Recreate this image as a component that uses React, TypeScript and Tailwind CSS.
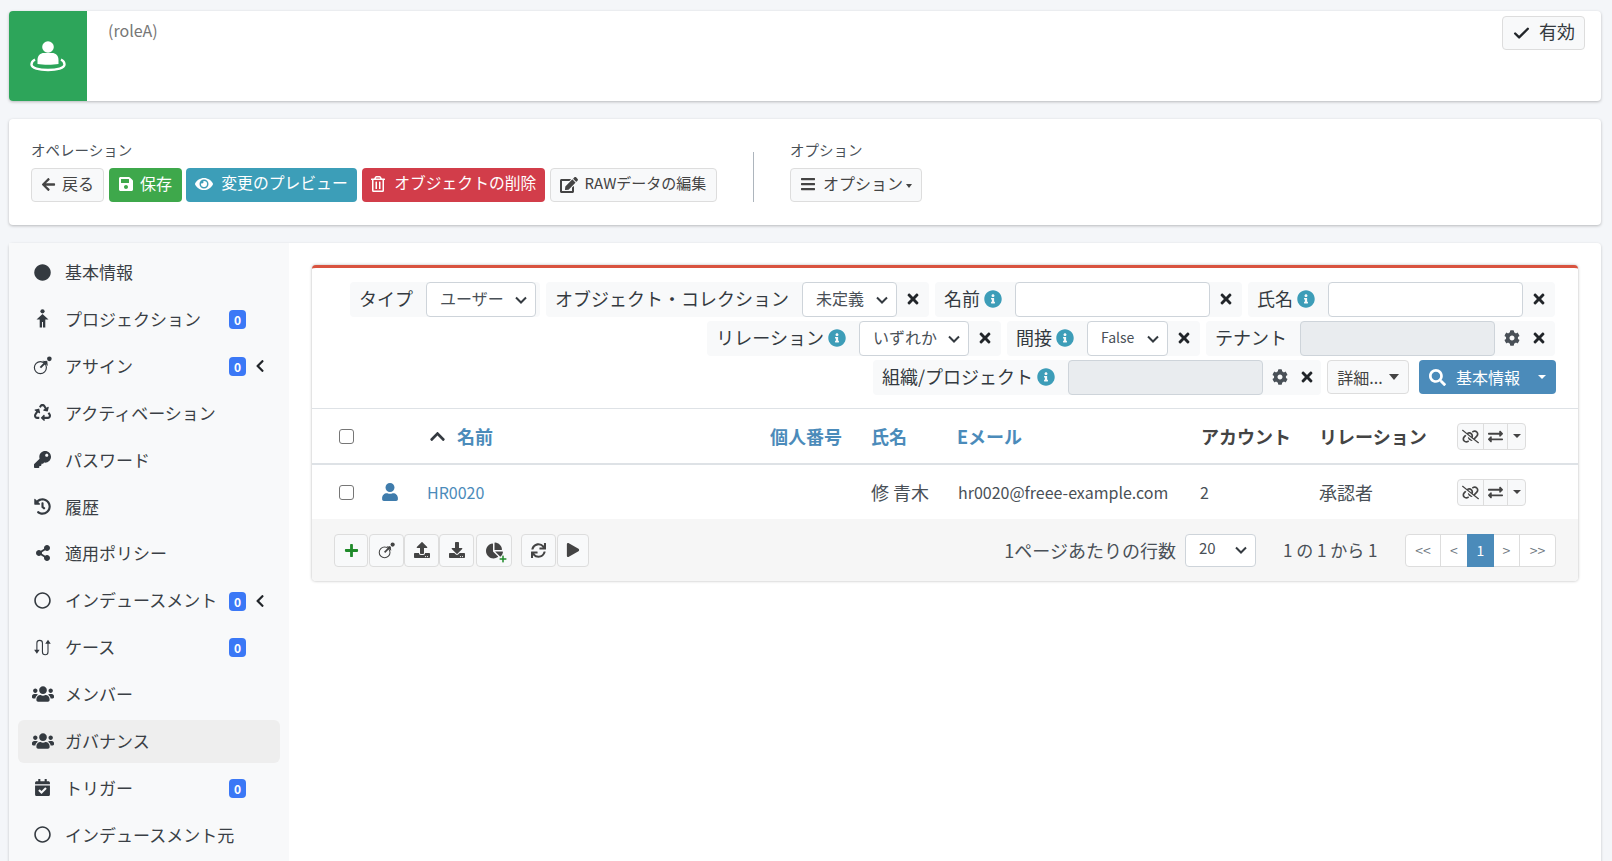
import React from "react";
import {
  FaArrowLeft, FaBars, FaCalendarCheck, FaChartPie, FaChevronLeft, FaChevronUp, FaCircle, FaCog,
  FaDownload, FaEdit, FaExchangeAlt, FaEye, FaHistory, FaInfoCircle, FaKey, FaPlay, FaPlus,
  FaRecycle, FaRegCircle, FaRegTrashAlt, FaSave, FaSearch, FaShareAlt, FaSync, FaTimes, FaUpload, FaUser, FaUsers,
} from "react-icons/fa";
import { FaLinkSlash } from "react-icons/fa6";
import { Check as CheckMark } from "lucide-react";

const RoleIcon = () => (
  <svg width="40" height="32" viewBox="0 0 40 32" fill="none">
    <circle cx="20" cy="7" r="5.800" fill="#fff" />
    <path d="M9.500 24v-4c0-4.500 3-7 6.500-7h8c3.500 0 6.500 2.500 6.500 7v4c-6 1-15 1-21 0z" fill="#fff" />
    <path d="M7 19.500C4 21 3.500 23 3.500 24.500 3.500 28 11 30 20 30s16.500-2 16.500-5.500C36.500 23 36 21 33 19.500" stroke="#fff" strokeWidth="2.400" />
  </svg>
);

const PersonIcon = () => (
  <svg width="13" height="19" viewBox="0 0 13 19" fill="currentColor">
    <circle cx="6.500" cy="2.300" r="2.100" />
    <path d="M6.500 5l6 5.500H9.300V18.500H7V13H6v5.500H3.700V10.500H.500z" />
  </svg>
);

const AssignIcon = ({ size = 19 }: { size?: number }) => (
  <svg width={size} height={size} viewBox="0 0 18 18" fill="none">
    <circle cx="7" cy="11" r="5.700" stroke="currentColor" strokeWidth="1.100" />
    <path d="M7 11l6-6" stroke="currentColor" strokeWidth="1.800" />
    <path d="M9 4.500l4.500.500.500 4.500z" fill="currentColor" />
    <circle cx="15.500" cy="2.700" r="2.200" fill="currentColor" />
  </svg>
);

const CaseIcon = () => (
  <svg width="20" height="20" viewBox="0 0 18 18" fill="none">
    <path d="M3.500 12V5.500a2.500 2.500 0 0 1 5 0v8a2.500 2.500 0 0 0 5 0V5" stroke="currentColor" strokeWidth="1" />
    <path d="M1 11.500h5L3.500 15zM11 6h5l-2.500-3.500z" fill="currentColor" />
  </svg>
);

const nav = [
  { label: "基本情報", icon: <FaCircle size={17} /> },
  { label: "プロジェクション", icon: <PersonIcon />, badge: true },
  { label: "アサイン", icon: <AssignIcon />, badge: true, arrow: true },
  { label: "アクティベーション", icon: <FaRecycle size={17} /> },
  { label: "パスワード", icon: <FaKey size={17} /> },
  { label: "履歴", icon: <FaHistory size={17} /> },
  { label: "適用ポリシー", icon: <FaShareAlt size={16} /> },
  { label: "インデュースメント", icon: <FaRegCircle size={17} />, badge: true, arrow: true },
  { label: "ケース", icon: <CaseIcon />, badge: true },
  { label: "メンバー", icon: <FaUsers size={22} /> },
  { label: "ガバナンス", icon: <FaUsers size={22} />, active: true },
  { label: "トリガー", icon: <FaCalendarCheck size={17} />, badge: true },
  { label: "インデュースメント元", icon: <FaRegCircle size={17} /> },
];

const Info = () => <FaInfoCircle size={18} className="text-[#3d9db8] shrink-0 ml-[4px]" />;
const Clear = () => <FaTimes size={16} className="text-[#212529] shrink-0" />;

const Label = ({ text, info }: { text: string; info?: boolean }) => (
  <span className="flex items-center pl-[9px] pr-[13px] pb-[2px] whitespace-nowrap">
    {text}
    {info && <Info />}
  </span>
);

const Select = ({ text, w, size = "text-[16px]" }: { text: string; w: string; size?: string }) => (
  <span className={`${w} ${size} h-[35px] shrink-0 bg-white border border-[#ced4da] rounded flex items-center justify-between pl-[13px] pr-[8px] text-[#495057]`}>
    <span className="pb-[3px]">{text}</span>
    <svg width="12" height="8" viewBox="0 0 12 8" fill="none">
      <path d="M1 1.500l5 5 5-5" stroke="#343a40" strokeWidth="2" />
    </svg>
  </span>
);

const Input = ({ disabled }: { disabled?: boolean }) => (
  <span className={`w-[195px] h-[35px] shrink-0 border border-[#ced4da] rounded ${disabled ? "bg-[#e9ecef]" : "bg-white"}`} />
);

const Group = ({ children, className = "" }: { children: React.ReactNode; className?: string }) => (
  <div className={`flex items-center h-[35px] bg-[#f8f9fa] rounded text-[18px] text-[#343a40] ${className}`}>{children}</div>
);

const XSlot = ({ gear }: { gear?: boolean }) => (
  <span className="flex items-center pb-[1px]">
    {gear && (
      <span className="w-[33px] flex justify-center">
        <FaCog size={16} className="text-[#495057]" />
      </span>
    )}
    <span className={gear ? "w-[25px] flex justify-center pr-[4px]" : "w-[32px] flex justify-center"}>
      <Clear />
    </span>
  </span>
);

const Tool = ({ children, className = "" }: { children: React.ReactNode; className?: string }) => (
  <button className={`h-[33px] flex items-center justify-center bg-[#f8f9fa] border border-[#ddd] rounded text-[#444] ${className}`}>
    {children}
  </button>
);

const RowActions = () => (
  <div className="flex h-[27px] w-[69px] bg-[#f8f9fa] border border-[#ddd] rounded text-[#444]">
    <span className="w-[26px] flex items-center justify-center border-r border-[#ddd]">
      <FaLinkSlash size={17} />
    </span>
    <span className="w-[24px] flex items-center justify-center border-r border-[#ddd]">
      <FaExchangeAlt size={15} />
    </span>
    <span className="flex-1 flex items-center justify-center">
      <span className="border-x-[4px] border-x-transparent border-t-[4px] border-t-[#444]" />
    </span>
  </div>
);

const Check = () => <span className="block w-[15px] h-[15px] border border-[#767676] rounded-[3px] bg-white" />;

export default function App() {
  return (
    <div className="h-[861px] overflow-hidden bg-[#f4f6f9] px-[9px] pr-[11px] pt-[11px] text-[#343a40] font-['Noto_Sans_CJK_JP','Noto_Sans',sans-serif] text-[16px]">
      {/* header */}
      <div className="h-[90px] flex bg-white rounded shadow-[0_1px_3px_rgba(0,0,0,0.25)]">
        <div className="w-[78px] bg-[#2da55a] rounded-l flex items-center justify-center">
          <RoleIcon />
        </div>
        <div className="flex-1 pl-[21px] pt-[6px] text-[#777] leading-[26px]">(roleA)</div>
        <button className="mt-[5px] mr-[16px] h-[34px] w-[83px] flex items-center justify-center gap-[8px] pb-[4px] bg-[#f8f9fa] border border-[#ddd] rounded text-[18px]">
          <CheckMark size={19} strokeWidth={3} className="text-[#212529] mt-[4px]" />
          有効
        </button>
      </div>

      {/* operations */}
      <div className="mt-[18px] h-[106px] flex bg-white rounded shadow-[0_1px_3px_rgba(0,0,0,0.25)] pl-[22px] pt-[21px]">
        <div className="w-[722px]">
          <div className="text-[14.500px] leading-[20px] text-[#495057]">オペレーション</div>
          <div className="mt-[8px] flex gap-[4.500px] text-white">
            <button className="w-[73px] h-[34px] flex items-center justify-center gap-[6px] pb-[3.500px] bg-[#f8f9fa] border border-[#ddd] rounded text-[#444]">
              <FaArrowLeft size={15} className="mt-[2px]" />
              戻る
            </button>
            <button className="w-[73px] h-[34px] flex items-center justify-center gap-[6px] pb-[3.500px] bg-[#3ea84b] rounded">
              <FaSave size={16} className="mt-[2px]" />
              保存
            </button>
            <button className="w-[171px] h-[34px] flex items-center justify-center gap-[8px] pb-[3.500px] bg-[#3c9eb8] rounded text-[15.800px]">
              <FaEye size={18} className="mt-[2px]" />
              変更のプレビュー
            </button>
            <button className="w-[183.500px] h-[34px] flex items-center justify-center gap-[8px] pb-[3.500px] bg-[#d23d4a] rounded text-[15.800px]">
              <FaRegTrashAlt size={16} className="mt-[2px]" />
              オブジェクトの削除
            </button>
            <button className="w-[167px] h-[34px] flex items-center justify-center gap-[7px] pb-[3px] bg-[#f8f9fa] border border-[#ddd] rounded text-[#444]">
              <FaEdit size={18} className="mt-[2px]" />
              <span className="text-[15px]">RAWデータの編集</span>
            </button>
          </div>
        </div>
        <div className="w-px h-[50px] bg-[#adb5bd] mt-[12px]" />
        <div className="ml-[36px]">
          <div className="text-[14.500px] leading-[20px] text-[#495057]">オプション</div>
          <button className="mt-[8px] w-[132px] h-[34px] flex items-center justify-center gap-[7px] pb-[3.500px] bg-[#f8f9fa] border border-[#ddd] rounded text-[#444]">
            <FaBars size={16} className="mt-[2px]" />
            オプション
            <span className="-ml-[4px] mt-[6px] border-x-[3.500px] border-x-transparent border-t-[4px] border-t-[#444]" />
          </button>
        </div>
      </div>

      {/* main */}
      <div className="mt-[18px] h-[640px] flex bg-white rounded shadow-[0_1px_3px_rgba(0,0,0,0.2)]">
        <div className="w-[280px] shrink-0 bg-[#f8f9fa] pl-[9px] pr-[9px] pt-[8.500px] text-[17px] text-[#3a3f45]">
          {nav.map((n) => (
            <div
              key={n.label}
              className={`relative h-[43px] mb-[3.860px] pb-[2px] flex items-center rounded-md ${n.active ? "bg-[#eeeeee]" : ""}`}
            >
              <span className="w-[47px] pl-[2px] flex justify-center text-[#343a40]">{n.icon}</span>
              <span className="whitespace-nowrap">{n.label}</span>
              {n.badge && (
                <span className="absolute left-[211px] top-[12px] w-[17px] h-[19px] rounded bg-[#3b78f6] text-white text-[12px] font-bold leading-[19px] text-center">
                  0
                </span>
              )}
              {n.arrow && <FaChevronLeft size={14} className="absolute left-[235px] top-[14px] text-[#212529]" />}
            </div>
          ))}
        </div>

        <div className="flex-1 pl-[23px] pr-[23px] pt-[22px]">
          <div className="h-[316px] border-t-[3px] border-t-[#d9533f] rounded bg-white shadow-[0_0_3px_rgba(0,0,0,0.3)] flex flex-col">
            {/* filters */}
            <div className="h-[141px] pt-[14px] pr-[23px] flex flex-col items-end gap-[4px] border-b border-[#dee2e6]">
              <div className="flex gap-[6px]">
                <Group className="pr-[4px]">
                  <Label text="タイプ" />
                  <Select text="ユーザー" w="w-[110px]" />
                </Group>
                <Group>
                  <Label text="オブジェクト・コレクション" />
                  <Select text="未定義" w="w-[95px]" />
                  <XSlot />
                </Group>
                <Group>
                  <Label text="名前" info />
                  <Input />
                  <XSlot />
                </Group>
                <Group>
                  <Label text="氏名" info />
                  <Input />
                  <XSlot />
                </Group>
              </div>
              <div className="flex gap-[6px]">
                <Group>
                  <Label text="リレーション" info />
                  <Select text="いずれか" w="w-[110px]" />
                  <XSlot />
                </Group>
                <Group>
                  <Label text="間接" info />
                  <Select text="False" w="w-[81px]" size="text-[14px]" />
                  <XSlot />
                </Group>
                <Group className="pr-[2px]">
                  <Label text="テナント" />
                  <Input disabled />
                  <XSlot gear />
                </Group>
              </div>
              <div className="flex gap-[6px] -mr-[1px]">
                <Group>
                  <Label text="組織/プロジェクト" info />
                  <Input disabled />
                  <XSlot gear />
                </Group>
                <button className="w-[82px] h-[34px] flex items-center justify-center gap-[6px] bg-[#f8f9fa] border border-[#ddd] rounded text-[#444]">
                  詳細...
                  <span className="border-x-[5px] border-x-transparent border-t-[6px] border-t-[#444]" />
                </button>
                <button className="ml-[4px] w-[137px] h-[34px] flex items-center bg-[#4b8bba] rounded text-white">
                  <FaSearch size={17} className="ml-[10px] mr-[10px]" />
                  基本情報
                  <span className="ml-[18px] border-x-[4px] border-x-transparent border-t-[4px] border-t-white" />
                </button>
              </div>
            </div>

            {/* table */}
            <table className="w-full table-fixed text-left">
              <colgroup>
                <col className="w-[63px]" />
                <col className="w-[39px]" />
                <col className="w-[344px]" />
                <col className="w-[101px]" />
                <col className="w-[86px]" />
                <col className="w-[244px]" />
                <col className="w-[118px]" />
                <col className="w-[137px]" />
                <col />
              </colgroup>
              <thead>
                <tr className="h-[55px] border-b-2 border-[#dee2e6] text-[18px] font-bold">
                  <th className="pl-[27px]">
                    <Check />
                  </th>
                  <th />
                  <th className="pl-[15px] text-[#4b8bba]">
                    <span className="flex items-center gap-[11px]">
                      <FaChevronUp size={17} className="text-[#343a40]" />
                      名前
                    </span>
                  </th>
                  <th className="pl-[12px] text-[#4b8bba] whitespace-nowrap">個人番号</th>
                  <th className="pl-[12px] text-[#4b8bba]">氏名</th>
                  <th className="pl-[12px] text-[#4b8bba]">Eメール</th>
                  <th className="pl-[12px] font-bold text-[#444]">アカウント</th>
                  <th className="pl-[12px] font-bold text-[#444]">リレーション</th>
                  <th className="pl-[13px]">
                    <RowActions />
                  </th>
                </tr>
              </thead>
              <tbody>
                <tr className="h-[55px] text-[18px] text-[#495057]">
                  <td className="pl-[27px]">
                    <Check />
                  </td>
                  <td className="pl-[6px] text-[#3f7cac]">
                    <FaUser size={18} />
                  </td>
                  <td className="pl-[13px] text-[#4b8bba] text-[16px]">HR0020</td>
                  <td />
                  <td className="pl-[12px]">修 青木</td>
                  <td className="pl-[13px] text-[16px] whitespace-nowrap">hr0020@freee-example.com</td>
                  <td className="pl-[11px] text-[16px]">2</td>
                  <td className="pl-[12px]">承認者</td>
                  <td className="pl-[13px]">
                    <RowActions />
                  </td>
                </tr>
              </tbody>
            </table>

            {/* footer */}
            <div className="flex-1 flex items-center bg-[#f6f6f6] rounded-b pl-[22px] pr-[22px]">
              <div className="flex">
                <Tool className="w-[34px]">
                  <FaPlus size={15} className="text-[#1f8a2a]" />
                </Tool>
                <Tool className="w-[35px] ml-px">
                  <AssignIcon size={17} />
                </Tool>
                <Tool className="w-[35px]">
                  <FaUpload size={16} />
                </Tool>
                <Tool className="w-[35px]">
                  <FaDownload size={16} />
                </Tool>
                <Tool className="w-[36px] ml-[2px] relative">
                  <FaChartPie size={17} />
                  <FaPlus size={8} className="absolute right-[4px] bottom-[3px] text-[#1f8a2a]" />
                </Tool>
                <Tool className="w-[35px] ml-[9px]">
                  <FaSync size={15} />
                </Tool>
                <Tool className="w-[32px] ml-px">
                  <FaPlay size={14} />
                </Tool>
              </div>
              <div className="ml-auto flex items-center text-[18px] text-[#495057] whitespace-nowrap">
                1ページあたりの行数
                <Select text="20" w="ml-[9px] !w-[71px] !h-[33px]" size="text-[15px]" />
                <span className="ml-[27px] w-[122px] text-[17px]">1 の 1 から 1</span>
                <div className="flex h-[33px] bg-white border border-[#ddd] rounded text-[14px] text-[#6c757d]">
                  <span className="w-[35px] flex items-center justify-center border-r border-[#ddd]">&lt;&lt;</span>
                  <span className="w-[26px] flex items-center justify-center">&lt;</span>
                  <span className="w-[27px] -my-px flex items-center justify-center bg-[#4b8bba] text-white">1</span>
                  <span className="w-[26px] flex items-center justify-center border-r border-[#ddd]">&gt;</span>
                  <span className="w-[35px] flex items-center justify-center">&gt;&gt;</span>
                </div>
              </div>
            </div>
          </div>
        </div>
      </div>
    </div>
  );
}
